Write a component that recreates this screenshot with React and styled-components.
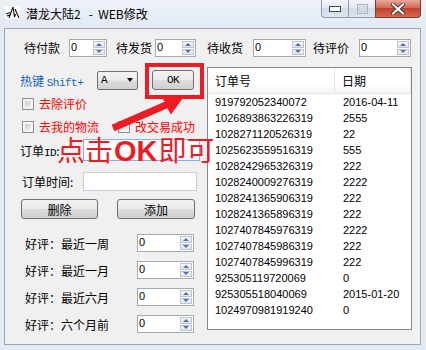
import React from "react";
import styled, { createGlobalStyle } from "styled-components";

const GlobalStyle = createGlobalStyle`
  html, body { margin: 0; padding: 0; background: #fff; }
  body {
    font-family: "Noto Sans CJK SC", "Noto Sans", sans-serif;
    font-size: 12px;
    color: #000;
  }
  * { box-sizing: border-box; }
`;

const orders = [
  ["919792052340072", "2016-04-11"],
  ["1026893863226319", "2555"],
  ["1028271120526319", "22"],
  ["1025623559516319", "555"],
  ["1028242965326319", "222"],
  ["1028240009276319", "2222"],
  ["1028241365906319", "222"],
  ["1028241365896319", "222"],
  ["1027407845976319", "2222"],
  ["1027407845986319", "222"],
  ["1027407845996319", "222"],
  ["925305119720069", "0"],
  ["925305518040069", "2015-01-20"],
  ["1024970981919240", "0"],
];

const topFields = [
  { label: "待付款", ml: 0, gap: 9, w: 38 },
  { label: "待发货", ml: 9, gap: 3, w: 41 },
  { label: "待收货", ml: 11, gap: 10, w: 53 },
  { label: "待评价", ml: 7, gap: 10, w: 52 },
];

const ratings = ["好评：最近一周", "好评：最近一月", "好评：最近六月", "好评：六个月前"];

const Spinner = ({ w }) => (
  <SpinBox $w={w}>
    <SpinValue>0</SpinValue>
    <SpinButtons>
      <SpinArrow $dir="up" />
      <SpinArrow $dir="down" />
    </SpinButtons>
  </SpinBox>
);

const Check = ({ children, ml }) => (
  <CheckItem $ml={ml}>
    <CheckBox />
    <RedLabel>{children}</RedLabel>
  </CheckItem>
);

const App = () => {
  return (
    <>
      <GlobalStyle />
      <Window>
        <TitleBar>
          <AppIcon width="15" height="13" viewBox="0 0 15 13">
            <rect width="15" height="13" fill="#fff" />
            <path d="M1 8 L5 6.5 M2 10 L6 8.5 M4 12 L8 1 L9.5 11 L10.5 8 M10 3 L14 12" stroke="#111" strokeWidth="1.1" fill="none" />
          </AppIcon>
          <Title>{"潜龙大陆2   -  WEB修改"}</Title>
          <Controls>
            <CtrlButton $w={28} $pos="first">
              <svg width="12" height="6" viewBox="0 0 12 6">
                <rect x="0.5" y="0.5" width="11" height="5" fill="#fff" stroke="#3c4656" />
              </svg>
            </CtrlButton>
            <CtrlButton $w={28}>
              <svg width="11" height="10" viewBox="0 0 11 10">
                <rect x="0.5" y="0.5" width="10" height="9" fill="none" stroke="#a8b2c0" />
                <rect x="2.5" y="2.5" width="6" height="5" fill="none" stroke="#c4ccd6" />
              </svg>
            </CtrlButton>
            <CtrlButton $w={46} $pos="last" $close>
              <svg width="14" height="12" viewBox="0 0 14 12">
                <path d="M2 1.5 L12 10.5 M12 1.5 L2 10.5" stroke="#4a3a3a" strokeWidth="4" strokeLinecap="square" />
                <path d="M2 1.5 L12 10.5 M12 1.5 L2 10.5" stroke="#fff" strokeWidth="2" strokeLinecap="square" />
              </svg>
            </CtrlButton>
          </Controls>
        </TitleBar>

        <Client>
          <TopRow>
            {topFields.map((f) => (
              <Field key={f.label} $ml={f.ml} $gap={f.gap}>
                <FieldLabel>{f.label}</FieldLabel>
                <Spinner w={f.w} />
              </Field>
            ))}
          </TopRow>

          <Body>
            <LeftCol>
              <Row $mt={3} $h={20}>
                <HotkeyLabel>
                  热键 <Mono>Shift+</Mono>
                </HotkeyLabel>
                <Dropdown>
                  <Mono>A</Mono>
                  <DropArrow />
                </Dropdown>
                <PushButton $w={42} $ml={14}>
                  <Mono>OK</Mono>
                </PushButton>
              </Row>

              <Row $mt={7} $h={13}>
                <Check ml={2}>去除评价</Check>
              </Row>
              <Row $mt={10} $h={13}>
                <Check ml={2}>去我的物流</Check>
                <Check ml={19}>改交易成功</Check>
              </Row>

              <Row $mt={6} $h={22}>
                <InlineLabel $w={63}>
                  订单<Mono>ID</Mono>:
                </InlineLabel>
                <TextInput $w={117} $focus />
              </Row>

              <Row $mt={11} $h={19}>
                <InlineLabel $w={61} $ml={2}>
                  订单时间:
                </InlineLabel>
                <TextInput $w={114} />
              </Row>

              <Row $mt={8} $h={20}>
                <PushButton $w={77} $ml={1}>删除</PushButton>
                <PushButton $w={78} $ml={19}>添加</PushButton>
              </Row>

              {ratings.map((r, i) => (
                <Row key={r} $mt={i === 0 ? 15 : 9} $h={18}>
                  <InlineLabel $w={112} $ml={5}>
                    {r}
                  </InlineLabel>
                  <Spinner w={57} />
                </Row>
              ))}
            </LeftCol>

            <OrderList>
              <ListHeader>
                <HeaderCell $w={127}>订单号</HeaderCell>
                <HeaderCell $w={76}>日期</HeaderCell>
              </ListHeader>
              {orders.map(([id, date], i) => (
                <ListRow key={i}>
                  <Cell $w={127} $pl={7}>{id}</Cell>
                  <Cell $w={76} $pl={8}>{date}</Cell>
                </ListRow>
              ))}
            </OrderList>
          </Body>
        </Client>

        {/* annotation drawn over the screenshot */}
        <Annotation>
          <RedFrame />
          <ArrowLayer width="426" height="350" viewBox="0 0 426 350">
            <polygon
              points="111.6,124.8 114.4,131.2 167.4,108.2 171,114.5 185,95 161,96 164.6,101.8"
              fill="#ed1c24"
            />
          </ArrowLayer>
          <Callout>
            点击<b>OK</b>即可
          </Callout>
        </Annotation>
      </Window>
    </>
  );
};

export default App;

// Styled Components

const Window = styled.div`
  position: relative;
  width: 426px;
  height: 350px;
  background: #e3eaf3;
  display: flex;
  flex-direction: column;
  overflow: hidden;
`;

const TitleBar = styled.div`
  height: 28px;
  display: flex;
  align-items: flex-start;
  padding-left: 5px;
  background: linear-gradient(#edf2f8, #e3eaf3);
`;

const AppIcon = styled.svg`
  margin-top: 6px;
  flex-shrink: 0;
`;

const Title = styled.div`
  margin-left: 6px;
  line-height: 27px;
  font-size: 12px;
  white-space: pre;
  color: #000;
`;

const Controls = styled.div`
  margin-left: auto;
  margin-right: 5px;
  display: flex;
`;

const CtrlButton = styled.div`
  width: ${(p) => p.$w}px;
  height: 18px;
  margin-left: -1px;
  display: flex;
  align-items: center;
  justify-content: center;
  border: 1px solid ${(p) => (p.$close ? "#7d3c33" : "#8e9bb0")};
  border-top: none;
  border-radius: ${(p) =>
    p.$pos === "first" ? "0 0 0 4px" : p.$pos === "last" ? "0 0 4px 0" : "0"};
  background: ${(p) =>
    p.$close
      ? "linear-gradient(#e9a89d, #d46a57 45%, #c4432d 50%, #d4664d)"
      : "linear-gradient(#f4f7fb, #e2e8f0 45%, #d3dbe6 50%, #dde4ee)"};
`;

const Client = styled.div`
  margin: 0 5px 0 4px;
  height: 317px;
  border: 1px solid #9ea6b0;
  background: #f0f0f0;
  display: flex;
  flex-direction: column;
`;

const TopRow = styled.div`
  display: flex;
  align-items: center;
  height: 18px;
  margin-top: 10px;
  padding-left: 19px;
`;

const Field = styled.div`
  display: flex;
  align-items: center;
  margin-left: ${(p) => p.$ml}px;
  gap: ${(p) => p.$gap}px;
`;

const FieldLabel = styled.span`
  line-height: 18px;
  white-space: nowrap;
`;

const SpinBox = styled.div`
  width: ${(p) => p.$w}px;
  height: 18px;
  display: flex;
  background: #fff;
  border: 1px solid #a3a9b1;
`;

const SpinValue = styled.span`
  flex: 1;
  padding-left: 1px;
  font-family: "Liberation Sans", Arial, sans-serif;
  font-size: 11px;
  line-height: 15px;
`;

const SpinButtons = styled.div`
  width: 12px;
  margin: 1px 1px 1px 0;
  display: flex;
  flex-direction: column;
  gap: 1px;
`;

const SpinArrow = styled.div`
  flex: 1;
  display: flex;
  align-items: center;
  justify-content: center;
  border: 1px solid #bcc4cf;
  background: linear-gradient(#f6f8fa, #dfe4ea);

  &::after {
    content: "";
    border-left: 3px solid transparent;
    border-right: 3px solid transparent;
    ${(p) =>
      p.$dir === "up"
        ? "border-bottom: 3px solid #4f6fb8;"
        : "border-top: 3px solid #4f6fb8;"}
  }
`;

const Body = styled.div`
  display: flex;
  margin-top: 10px;
`;

const LeftCol = styled.div`
  width: 202px;
  padding-left: 15px;
  display: flex;
  flex-direction: column;
`;

const Row = styled.div`
  display: flex;
  align-items: center;
  height: ${(p) => p.$h}px;
  margin-top: ${(p) => p.$mt}px;
`;

const Mono = styled.span`
  font-family: "Liberation Mono", "Courier New", monospace;
  font-size: 11px;
  letter-spacing: -0.5px;
`;

const HotkeyLabel = styled.span`
  width: 77px;
  color: #1561c0;
  white-space: pre;
`;

const Dropdown = styled.div`
  width: 41px;
  height: 19px;
  display: flex;
  align-items: center;
  padding: 0 4px 0 3px;
  border: 1px solid #707070;
  border-radius: 2px;
  background: linear-gradient(#f2f2f2, #ebebeb 48%, #dddddd 52%, #cfcfcf);
`;

const DropArrow = styled.span`
  margin-left: auto;
  border-left: 3.5px solid transparent;
  border-right: 3.5px solid transparent;
  border-top: 4px solid #111;
`;

const PushButton = styled.div`
  width: ${(p) => p.$w}px;
  height: 100%;
  margin-left: ${(p) => p.$ml || 0}px;
  display: flex;
  align-items: center;
  justify-content: center;
  border: 1px solid #707070;
  border-radius: 3px;
  background: linear-gradient(#f2f2f2, #ebebeb 48%, #dddddd 52%, #cfcfcf);
`;

const CheckItem = styled.div`
  display: flex;
  align-items: center;
  gap: 5px;
  margin-left: ${(p) => p.$ml}px;
`;

const CheckBox = styled.span`
  width: 12px;
  height: 12px;
  border: 1px solid #8e8f8f;
  background: #f4f4f4;
  padding: 2px;

  &::after {
    content: "";
    display: block;
    width: 100%;
    height: 100%;
    background: linear-gradient(135deg, #c9cbce, #f1f1f1);
  }
`;

const RedLabel = styled.span`
  color: #ff0000;
  white-space: nowrap;
`;

const InlineLabel = styled.span`
  width: ${(p) => p.$w}px;
  margin-left: ${(p) => p.$ml || 0}px;
  white-space: nowrap;
`;

const TextInput = styled.div`
  width: ${(p) => p.$w}px;
  height: 100%;
  background: #fff;
  border: 1px solid ${(p) => (p.$focus ? "#7eb4ea" : "#c4d0dc")};
`;

const OrderList = styled.div`
  width: 205px;
  height: 263px;
  border: 1px solid #828790;
  background: #fff;
  overflow: hidden;
`;

const ListHeader = styled.div`
  display: flex;
  height: 26px;
  background: linear-gradient(#ffffff 60%, #f4f5f7);
  border-bottom: 1px solid #e3e6ea;
`;

const HeaderCell = styled.div`
  width: ${(p) => p.$w}px;
  padding-left: 7px;
  line-height: 25px;
  border-right: 1px solid #e3e6ea;
`;

const ListRow = styled.div`
  display: flex;
  height: 16px;
  align-items: center;
`;

const Cell = styled.div`
  width: ${(p) => p.$w}px;
  padding-left: ${(p) => p.$pl}px;
  font-family: "Liberation Sans", Arial, sans-serif;
  font-size: 11px;
  white-space: nowrap;
`;

const Annotation = styled.div`
  position: absolute;
  inset: 0;
  pointer-events: none;
`;

const RedFrame = styled.div`
  position: absolute;
  left: 145px;
  top: 63px;
  width: 59px;
  height: 36px;
  border: 4px solid #ed1c24;
`;

const ArrowLayer = styled.svg`
  position: absolute;
  left: 0;
  top: 0;
`;

const Callout = styled.div`
  position: absolute;
  left: 57px;
  top: 131px;
  font-size: 28px;
  line-height: 36px;
  color: #ed1c24;
  white-space: nowrap;

  b {
    font-family: "Liberation Sans", Arial, sans-serif;
    font-weight: bold;
    font-size: 29px;
    margin: 0 1px;
  }
`;
